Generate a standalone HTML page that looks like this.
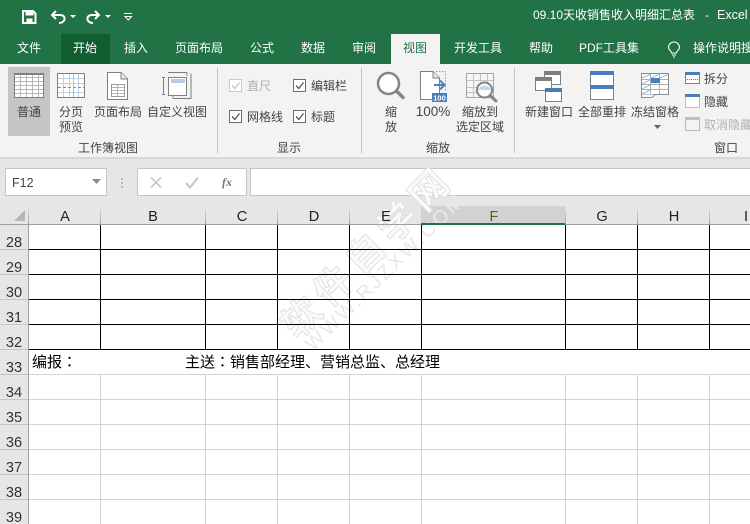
<!DOCTYPE html>
<html><head><meta charset="utf-8"><style>
html,body{margin:0;padding:0;width:750px;height:524px;overflow:hidden;background:#fff}
svg{display:block}
text{font-family:"Liberation Sans","Noto Sans CJK SC",sans-serif}
.c{font-size:12px;fill:#444;text-anchor:middle}
.l{font-size:12px;fill:#444}
.w{font-size:12px;fill:#fff;text-anchor:middle}
.g{fill:#b1b1b1}
.h{font-size:14.6px;fill:#222;text-anchor:middle}
.n{font-size:14.6px;fill:#333;text-anchor:middle}
.s{font-size:15px;fill:#000}
.tc{font-family:"Noto Sans CJK TC",sans-serif}
.e{shape-rendering:crispEdges}
</style></head><body>
<svg width="750" height="524" viewBox="0 0 750 524" xmlns="http://www.w3.org/2000/svg">
<!-- backgrounds -->
<g class="e">
<rect width="750" height="64" fill="#217346"/>
<rect x="61" y="34" width="49" height="30" fill="#115e31"/>
<rect x="391" y="34" width="49" height="30" fill="#f3f3f3"/>
<rect y="64" width="750" height="93" fill="#f3f3f3"/>
<rect y="157" width="750" height="2" fill="#d8d8d8"/>
<rect y="159" width="750" height="65" fill="#e6e6e6"/>
<rect x="5.500" y="168.500" width="101" height="27" fill="#fff" stroke="#c6c6c6"/>
<rect x="137.500" y="168.500" width="109" height="27" fill="#fff" stroke="#c6c6c6"/>
<rect x="250.500" y="168.500" width="510" height="27" fill="#fff" stroke="#c6c6c6"/>
<rect x="8" y="67" width="42" height="69" fill="#c5c5c5"/>
<rect x="0" y="224" width="28" height="300" fill="#e6e6e6"/>
<rect x="421" y="206" width="144" height="18" fill="#d2d2d2"/>
<path d="M217.500 68V153M361.500 68V153M514.500 68V153" stroke="#c4c4c4"/>
</g>

<!-- watermark -->
<g>
<text transform="translate(297.600,340.400) rotate(-45)" font-size="38" font-weight="700" letter-spacing="7" fill="#fafafa" stroke="#dedede" stroke-width=".9" style="font-family:'Noto Sans CJK SC',sans-serif">软件自学网</text>
<text transform="translate(313,352) rotate(-44.500)" font-size="20" letter-spacing="2.600" fill="#e9e9e9">WWW.RJZXW.COM</text>
</g>

<!-- QAT -->
<g fill="none" stroke="#fff">
<path d="M23 11H33L35.500 13.500V23H23Z" stroke-width="2"/>
<path d="M26 11H33V15H26ZM27 19H32V23H27Z" fill="#fff" stroke-width="1"/>
<path d="M56 11L52 15L56 19M52 15H60C66.500 15 66 23 59 23" stroke-width="2"/>
<path d="M95 11L99 15L95 19M99 15H92C85.500 15 86 23 93 23" stroke-width="2"/>
<path d="M124 13.500H132" stroke-width="1"/>
<path d="M125 16.500H131.500L128.200 20Z" stroke-width="1"/>
</g>
<path d="M70 15H76L73 18ZM105 15H111L108 18Z" fill="#fff"/>
<text class="l" x="533" y="19" style="fill:#fff">09.10天收销售收入明细汇总表</text>
<text class="l" x="705" y="19" style="fill:#fff">-</text>
<text x="717" y="19" font-size="12.500" fill="#fff">Excel</text>

<!-- tabs -->
<text class="w" x="29" y="52">文件</text>
<text class="w" x="85" y="52">开始</text>
<text class="w" x="136" y="52">插入</text>
<text class="w" x="199" y="52">页面布局</text>
<text class="w" x="262" y="52">公式</text>
<text class="w" x="313" y="52">数据</text>
<text class="w" x="364" y="52">审阅</text>
<text class="c" x="415" y="52" style="fill:#217346">视图</text>
<text class="w" x="478" y="52">开发工具</text>
<text class="w" x="541" y="52">帮助</text>
<text class="w" x="609" y="52">PDF工具集</text>
<g fill="none" stroke="#fff" stroke-width="1.100">
<path d="M671.500 53C671.500 50.500 668.500 50 668.500 47.500A5.500 5.500 0 0 1 679.500 47.500C679.500 50 676.500 50.500 676.500 53Z"/>
<path d="M672 55H676M673 57H675"/>
</g>
<text class="l" x="693" y="52" style="fill:#fff">操作说明搜</text>

<!-- 普通 icon -->
<g class="e">
<rect x="14.500" y="73.500" width="29" height="24" fill="#fff" stroke="#7f7f7f"/>
<path d="M15 77.500H43M15 81.500H43M15 85.500H43M15 89.500H43M15 93.500H43M20.500 74V97M26.500 74V97M32.500 74V97M38.500 74V97" stroke="#b8b8b8"/>
<rect x="14" y="73" width="30" height="2" fill="#7f7f7f"/>
</g>
<!-- 分页预览 icon -->
<g class="e">
<rect x="57.500" y="73.500" width="27" height="24" fill="#fff" stroke="#7f7f7f"/>
<path d="M58 78.500H84M58 83.500H84M58 92.500H84M63.500 74V97M69.500 74V97M78.500 74V97" stroke="#bcd0e8"/>
<path d="M58 87.500H84" stroke="#6f8db3" stroke-dasharray="3 2"/>
<path d="M73.500 74V97" stroke="#a9c0dc"/>
</g>
<!-- 页面布局 icon -->
<path d="M107.500 72.500H121L127.500 79V99.500H107.500Z" fill="#fff" stroke="#7f7f7f"/>
<path d="M121 72.500V79H127.500" fill="#e8e8e8" stroke="#7f7f7f"/>
<g class="e">
<rect x="111.500" y="84.500" width="13" height="12" fill="#fff" stroke="#9a9a9a"/>
<path d="M112 87.500H124M112 90.500H124M112 93.500H124M117.500 85V96" stroke="#b5b5b5"/>
</g>
<!-- 自定义视图 icon -->
<g class="e" fill="none" stroke="#7f7f7f">
<rect x="168.500" y="77.500" width="18" height="18" fill="#fff"/>
<path d="M168 72.500H187M191 73.500V98.500H173M163.500 77V95"/>
<path d="M165 77.500H162M165 94.500H162M187 72.500V76M173 98.500V95"/>
<rect x="171" y="79" width="14" height="4" fill="#b8cce4" stroke="none"/>
</g>

<text class="c" x="29" y="116">普通</text>
<text class="c" x="71" y="116">分页</text>
<text class="c" x="71" y="131">预览</text>
<text class="c" x="118" y="116">页面布局</text>
<text class="c" x="177" y="116">自定义视图</text>
<text class="c" x="108" y="152">工作簿视图</text>

<!-- checkboxes -->
<g class="e" fill="#fff">
<rect x="229.500" y="79.500" width="12" height="12" stroke="#c9c9c9"/>
<rect x="293.500" y="79.500" width="12" height="12" stroke="#6d6d6d"/>
<rect x="229.500" y="110.500" width="12" height="12" stroke="#6d6d6d"/>
<rect x="293.500" y="110.500" width="12" height="12" stroke="#6d6d6d"/>
</g>
<g fill="none" stroke-width="1.300">
<path d="M232 85.500L234.800 88.500L239.500 82.500" stroke="#c4c4c4"/>
<path d="M296 85.500L298.800 88.500L303.500 82.500" stroke="#555"/>
<path d="M232 116.500L234.800 119.500L239.500 113.500" stroke="#555"/>
<path d="M296 116.500L298.800 119.500L303.500 113.500" stroke="#555"/>
</g>
<text class="l g" x="247" y="90">直尺</text>
<text class="l" x="311" y="90">编辑栏</text>
<text class="l" x="247" y="121">网格线</text>
<text class="l" x="311" y="121">标题</text>
<text class="c" x="289" y="152">显示</text>

<!-- zoom group -->
<circle cx="388.500" cy="83.500" r="10.500" fill="#fff" stroke="#858585" stroke-width="2.500"/>
<path d="M396.500 91L403 97.500" stroke="#858585" stroke-width="3.500" stroke-linecap="round"/>
<text class="c" x="391" y="116">缩</text>
<text class="c" x="391" y="131">放</text>

<path d="M420.500 71.500H433L439.500 78V99.500H420.500Z" fill="#fff" stroke="#7f7f7f"/>
<path d="M433 71.500V78H439.500" fill="#e8e8e8" stroke="#7f7f7f"/>
<path d="M436 71.500H445.500V92" fill="none" stroke="#9a9a9a" stroke-dasharray="1.500 1.500"/>
<path d="M434 85H444M440 80.500L444.500 85L440 89.500" fill="none" stroke="#4a80bb" stroke-width="2"/>
<rect x="432" y="93" width="15" height="9" fill="#4a7eba"/>
<text x="439.500" y="100.500" font-size="7.500" font-weight="700" fill="#fff" text-anchor="middle">100</text>
<text x="433" y="116" font-size="13.500" fill="#444" text-anchor="middle">100%</text>

<g class="e">
<rect x="466.500" y="73.500" width="27" height="24" fill="#f5f5f5" stroke="#a5a5a5"/>
<path d="M467 80.500H493M467 87.500H493M467 92.500H493M473.500 74V97M480.500 74V97M487.500 74V97" stroke="#c4c4c4"/>
</g>
<circle cx="484.500" cy="90" r="7.500" fill="#fff" stroke="#858585" stroke-width="2"/>
<path d="M478 90A7 7 0 0 1 491 90Z" fill="#c3d6ec"/>
<path d="M490 95.500L496 101" stroke="#858585" stroke-width="3" stroke-linecap="round"/>
<text class="c" x="480" y="116">缩放到</text>
<text class="c" x="480" y="131">选定区域</text>
<text class="c" x="438" y="152">缩放</text>

<!-- window group -->
<g class="e">
<rect x="544.500" y="71.500" width="16" height="13" fill="#fff" stroke="#7f7f7f"/><rect x="544" y="71" width="17" height="4" fill="#7f7f7f"/>
<rect x="535.500" y="77.500" width="16" height="13" fill="#fff" stroke="#7f7f7f"/><rect x="535" y="77" width="17" height="4" fill="#7f7f7f"/>
<rect x="545.500" y="88.500" width="16" height="13" fill="#fff" stroke="#7f7f7f"/><rect x="545" y="88" width="17" height="4" fill="#4a7eba"/>
<rect x="590.500" y="71.500" width="23" height="28" fill="#fff" stroke="#7f7f7f"/>
<rect x="590" y="71" width="24" height="4" fill="#4a7eba"/><rect x="590" y="85" width="24" height="4" fill="#4a7eba"/>
<rect x="641.500" y="73.500" width="27" height="21" fill="#fff" stroke="#8a8a8a"/>
<path d="M642 79.500H668M642 84.500H668M642 89.500H668M650.500 74V94M659.500 74V94" stroke="#b0b0b0"/>
<rect x="651" y="78" width="9" height="5" fill="#4a7eba"/>
</g>
<path d="M642 78L651 74M651 78L660 74M660 78L668 74.500M642 84L650 80M642 89L650 85M642 94L650 90" stroke="#9dbcdc" fill="none"/>
<path d="M641.500 94.500V97.500H652L655 94.500" fill="#fff" stroke="#8a8a8a"/>
<text class="c" x="549" y="116">新建窗口</text>
<text class="c" x="602" y="116">全部重排</text>
<text class="c" x="655" y="116">冻结窗格</text>
<path d="M654 125H661L657.500 129Z" fill="#666"/>
<g class="e">
<rect x="685.500" y="73.500" width="14" height="10" fill="#fff" stroke="#7f7f7f"/><rect x="685" y="72" width="15" height="3" fill="#4a7eba"/>
<path d="M687 79.500H698" stroke="#4a7eba" stroke-dasharray="1 1"/>
<rect x="685.500" y="95.500" width="14" height="12" fill="#fff" stroke="#7f7f7f" stroke-dasharray="1 1"/><rect x="685" y="94" width="15" height="3" fill="#4a7eba"/>
<rect x="685.500" y="117.500" width="14" height="13" fill="#f3f3f3" stroke="#b8b8b8"/><rect x="685" y="117" width="15" height="3" fill="#c0c0c0"/>
</g>
<text class="l" x="704" y="83">拆分</text>
<text class="l" x="704" y="106">隐藏</text>
<text class="l g" x="704" y="129">取消隐藏</text>
<text class="c" x="726" y="152">窗口</text>

<!-- formula bar -->
<text x="12" y="187" font-size="12.500" fill="#444">F12</text>
<path d="M92 179H101L96.500 184Z" fill="#8a8a8a"/>
<path d="M122 178V180M122 182V184M122 186V188" stroke="#a8a8a8" stroke-width="1.500"/>
<path d="M151 177.500L161 187.500M161 177.500L151 187.500" stroke="#c8c8c8" stroke-width="1.600" fill="none"/>
<path d="M186 183L190 187.500L198 177.500" stroke="#c8c8c8" stroke-width="2.200" fill="none"/>
<text x="222" y="186" font-size="12" font-style="italic" font-weight="700" fill="#777" style="font-family:'Liberation Serif',serif">fx</text>

<!-- column headers -->
<path d="M14 221H25V210Z" fill="#b5b5b5"/>
<defs><linearGradient id="sep" x1="0" y1="0" x2="0" y2="1"><stop offset="0" stop-color="#e6e6e6"/><stop offset="1" stop-color="#9f9f9f"/></linearGradient></defs>
<g class="e" fill="url(#sep)">
<rect x="28" y="206" width="1" height="18"/><rect x="100" y="206" width="1" height="18"/><rect x="205" y="206" width="1" height="18"/><rect x="277" y="206" width="1" height="18"/><rect x="349" y="206" width="1" height="18"/><rect x="565" y="206" width="1" height="18"/><rect x="637" y="206" width="1" height="18"/><rect x="709" y="206" width="1" height="18"/>
</g>
<text class="h" x="65" y="221">A</text>
<text class="h" x="153" y="221">B</text>
<text class="h" x="242" y="221">C</text>
<text class="h" x="314" y="221">D</text>
<text class="h" x="386" y="221">E</text>
<text class="h" x="494" y="221" style="fill:#6b5a1e">F</text>
<text class="h" x="602" y="221">G</text>
<text class="h" x="674" y="221">H</text>
<text class="h" x="746" y="221">I</text>
<g class="e">
<path d="M0 224.500H750" stroke="#9f9f9f"/>
<rect x="421" y="223" width="144" height="2" fill="#217346"/>
<path d="M28.500 224V524" stroke="#9f9f9f"/>
<path d="M0 249.500H28M0 274.500H28M0 299.500H28M0 324.500H28M0 349.500H28M0 374.500H28M0 399.500H28M0 424.500H28M0 449.500H28M0 474.500H28M0 499.500H28" stroke="#c6c6c6"/>
</g>
<text class="n" x="14" y="247">28</text>
<text class="n" x="14" y="272">29</text>
<text class="n" x="14" y="297">30</text>
<text class="n" x="14" y="322">31</text>
<text class="n" x="14" y="347">32</text>
<text class="n" x="14" y="372">33</text>
<text class="n" x="14" y="397">34</text>
<text class="n" x="14" y="422">35</text>
<text class="n" x="14" y="447">36</text>
<text class="n" x="14" y="472">37</text>
<text class="n" x="14" y="497">38</text>
<text class="n" x="14" y="522">39</text>

<!-- grid -->
<g class="e">
<path d="M29 399.500H750M29 424.500H750M29 449.500H750M29 474.500H750M29 499.500H750M29 374.500H750M100.500 375V524M205.500 375V524M277.500 375V524M349.500 375V524M421.500 375V524M565.500 375V524M637.500 375V524M709.500 375V524" stroke="#d4d4d4"/>
<path d="M29 249.500H750M29 274.500H750M29 299.500H750M29 324.500H750M29 349.500H750M100.500 225V349M205.500 225V349M277.500 225V349M349.500 225V349M421.500 225V349M565.500 225V349M637.500 225V349M709.500 225V349" stroke="#000"/>
</g>
<text class="s" x="32" y="367">编报<tspan class="tc">：</tspan></text>
<text class="s" x="185" y="367">主送<tspan class="tc">：</tspan>销售部经理、营销总监、总经理</text>
</svg>
</body></html>
